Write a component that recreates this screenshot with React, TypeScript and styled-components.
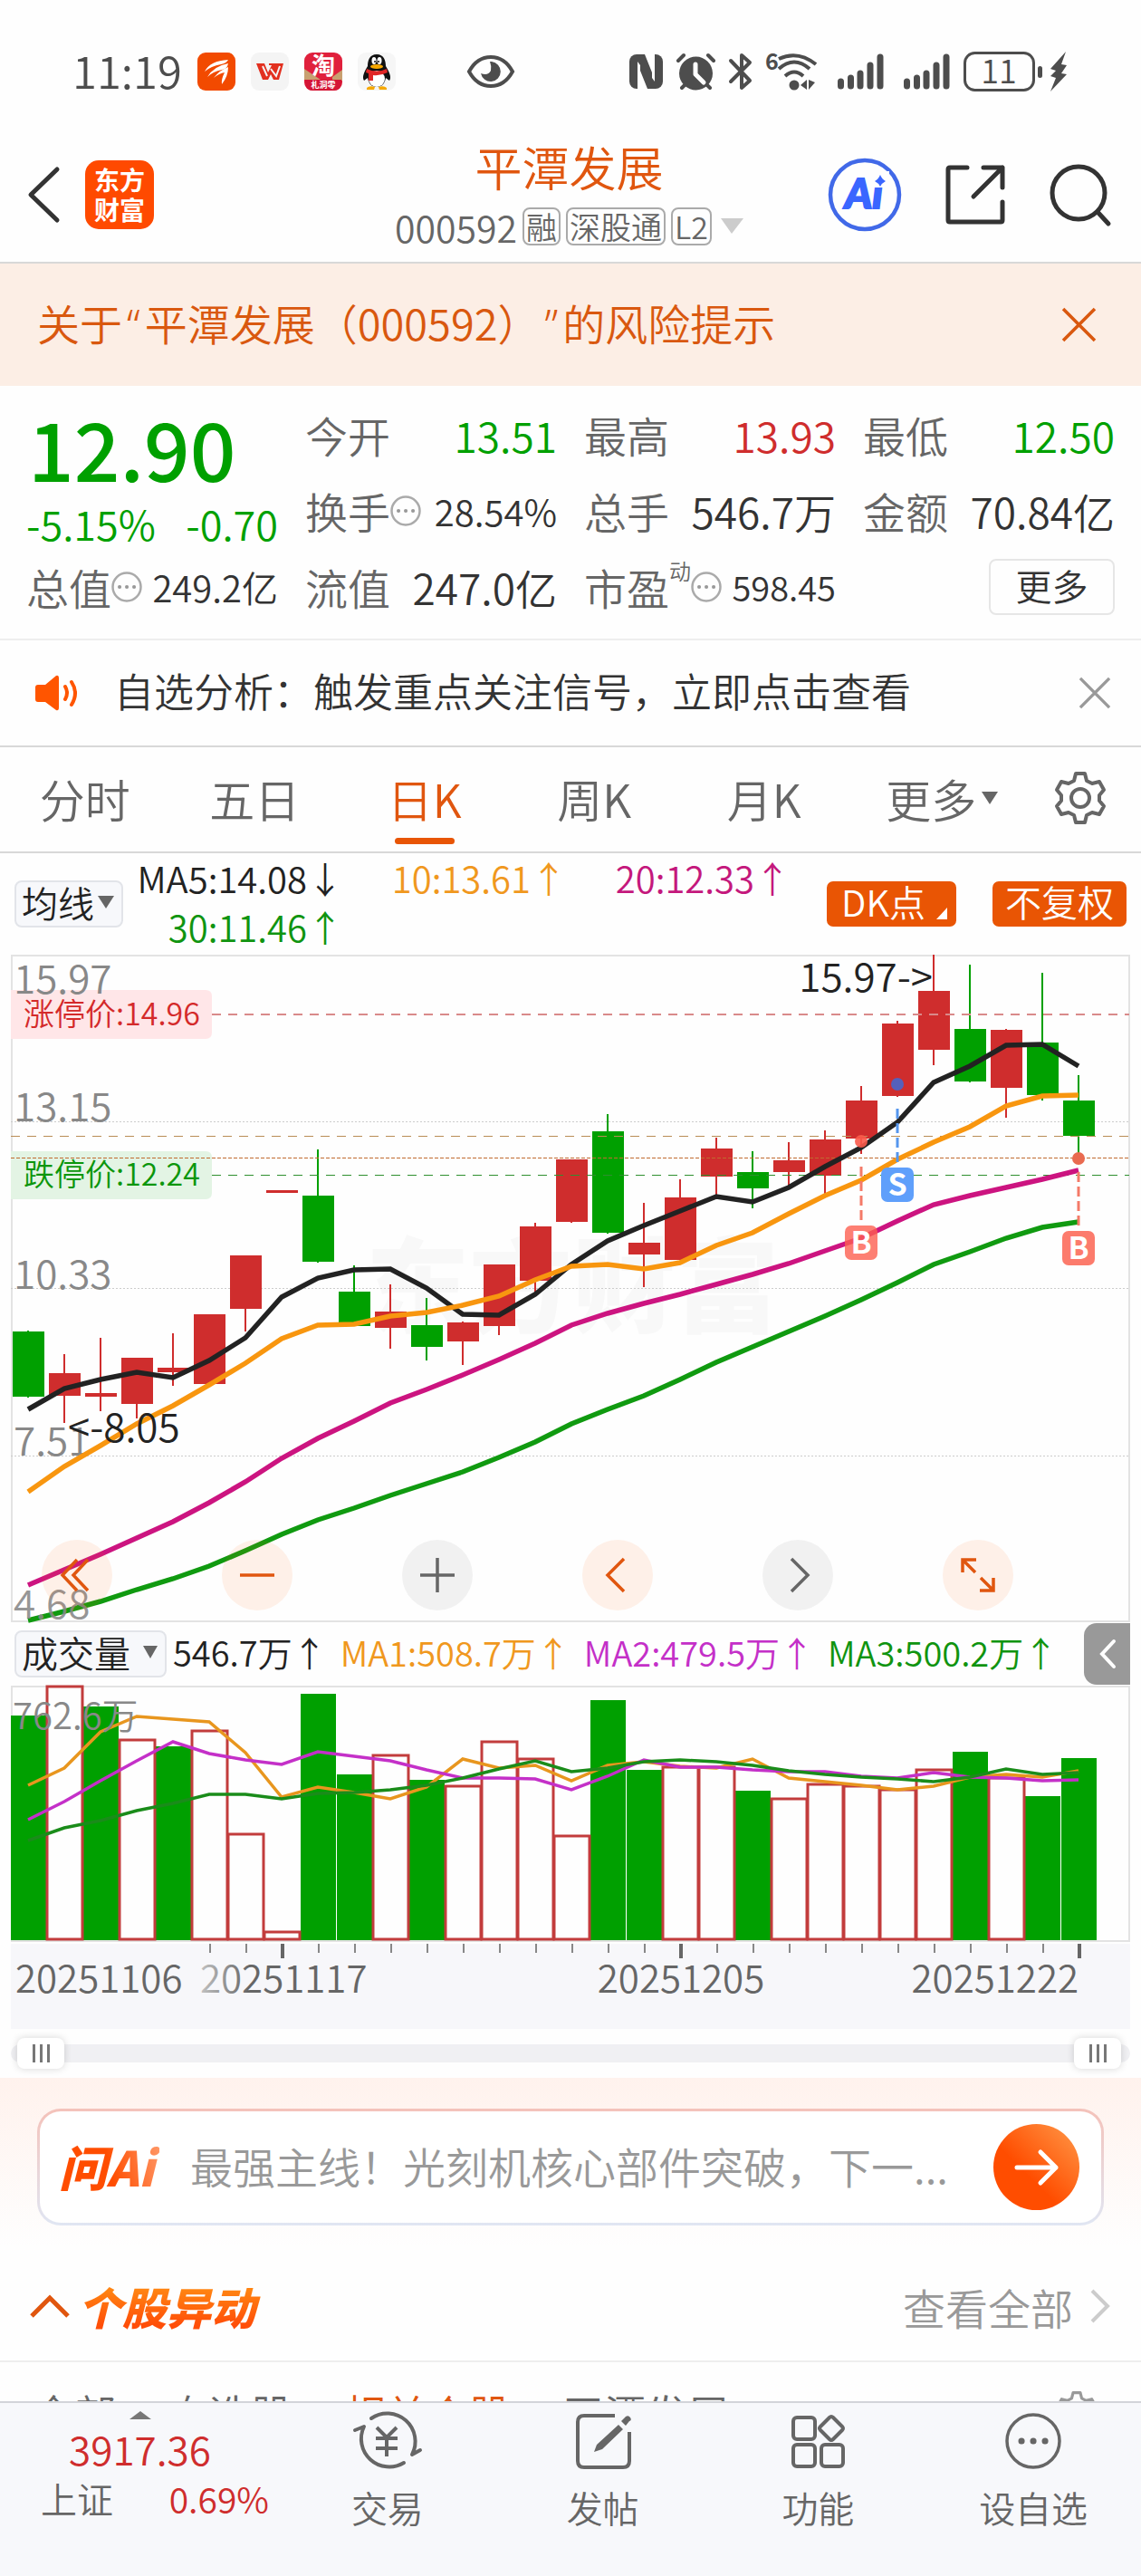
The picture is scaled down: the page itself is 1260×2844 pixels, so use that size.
import React from "react";
import styled, { createGlobalStyle, css } from "styled-components";

const GREEN = "#00a000";
const RED = "#cf2d2d";
const ORANGE = "#e0560f";

const GlobalStyle = createGlobalStyle`
  * { box-sizing: border-box; }
  body { margin: 0; background: #fff; }
  button { font: inherit; color: inherit; background: none; border: 0; padding: 0; cursor: pointer; }
  a { color: inherit; text-decoration: none; }
  svg { display: block; flex: none; overflow: visible; }
`;

const Screen = styled.div`
  display: flex;
  flex-direction: column;
  height: 100vh;
  overflow: hidden;
  background: #fefefe;
  color: #333;
  font-family: "Noto Sans CJK SC", "Noto Sans", sans-serif;
  font-weight: 350;
  text-spacing-trim: space-all;
`;

const Content = styled.main`
  flex: 1;
  min-height: 0;
  overflow-y: auto;
  scrollbar-width: none;
`;

/* ---------- status bar ---------- */

const StatusBar = styled.div`
  display: flex;
  align-items: center;
  justify-content: space-between;
  height: 140px;
  padding: 18px 80px 0 80px;
  color: #4d4d4d;
`;

const StatusGroup = styled.div<{ $gap: number }>`
  display: flex;
  align-items: center;
  gap: ${(p) => p.$gap}px;
`;

const Clock = styled.span`
  padding-bottom: 4px;
  font-size: 49px;
  line-height: 60px;
`;

const EyeSlot = styled.span`
  margin-left: 61px;
`;

/* ---------- header ---------- */

const Header = styled.header`
  display: grid;
  grid-template-columns: 1fr auto 1fr;
  align-items: center;
  height: 151px;
  padding: 0 33px 0 30px;
  border-bottom: 2px solid #d8d8d8;
`;

const HeaderSide = styled.div<{ $end?: boolean }>`
  display: flex;
  align-items: center;
  gap: ${(p) => (p.$end ? 49 : 28)}px;
  justify-content: ${(p) => (p.$end ? "flex-end" : "flex-start")};
`;

const BrandTile = styled.a`
  display: grid;
  place-content: center;
  width: 76px;
  height: 76px;
  border-radius: 15px;
  background: #ff4a00;
  color: #fff;
  font-size: 28px;
  font-weight: 700;
  line-height: 33px;
  text-align: center;
`;

const TitleBlock = styled.div`
  display: flex;
  flex-direction: column;
  align-items: center;
  padding-top: 4px;
`;

const Title = styled.h1`
  margin: 0;
  color: ${ORANGE};
  font-size: 52px;
  font-weight: 350;
  line-height: 66px;
`;

const CodeLine = styled.div`
  display: flex;
  align-items: center;
  gap: 6px;
  height: 66px;
  color: #666;
  font-size: 41px;
  line-height: 66px;
`;

const MarketTag = styled.span`
  padding: 0 2px;
  border: 2px solid #aaa;
  border-radius: 8px;
  font-size: 34px;
  line-height: 38px;
`;

const Caret = styled.svg`
  margin-left: 4px;
`;

/* ---------- notices ---------- */

const RiskNotice = styled.div`
  display: flex;
  align-items: center;
  justify-content: space-between;
  height: 135px;
  padding: 0 50px 0 41px;
  background: #fceee5;
  color: #d9580f;
  font-size: 47px;
`;

const NoticeLink = styled.a`
  flex: 1;
  padding-bottom: 6px;
`;

const Quote = styled.span`
  padding: 0 5px;
  font-family: "Noto Sans", sans-serif;
`;

const WatchNotice = styled.div`
  display: flex;
  align-items: center;
  gap: 38px;
  height: 118px;
  padding: 0 34px 0 38px;
  border-bottom: 2px solid #d8d8d8;
  font-size: 44px;
`;

/* ---------- quote figures ---------- */

const Figures = styled.section`
  display: grid;
  grid-template-columns: repeat(4, 1fr);
  grid-auto-rows: 84px;
  column-gap: 30px;
  padding: 12px 29px 15px;
  border-bottom: 2px solid #eee;
`;

const PriceBlock = styled.div`
  grid-row: span 2;
  display: flex;
  flex-direction: column;
  color: ${GREEN};
`;

const Price = styled.strong`
  padding-left: 2px;
  font-size: 89px;
  font-weight: 500;
  line-height: 112px;
`;

const ChangeLine = styled.div`
  display: flex;
  justify-content: space-between;
  font-size: 45px;
  line-height: 56px;
`;

const Figure = styled.div`
  display: flex;
  align-items: center;
  justify-content: space-between;
  white-space: nowrap;
`;

const FigureLabel = styled.span`
  display: flex;
  align-items: center;
  color: #666;
  font-size: 47px;
  line-height: 60px;
`;

const FigureNote = styled.sup`
  align-self: flex-start;
  font-size: 24px;
  line-height: 24px;
`;

const FigureValue = styled.span<{ $tone?: string; $size?: number }>`
  color: ${(p) => p.$tone ?? "#333"};
  font-size: ${(p) => p.$size ?? 46}px;
  line-height: 60px;
`;

const MoreCell = styled.div`
  display: flex;
  align-items: center;
  justify-content: flex-end;
`;

const MoreButton = styled.button`
  width: 139px;
  height: 62px;
  padding-bottom: 4px;
  border: 2px solid #e6e6e6;
  border-radius: 8px;
  font-size: 40px;
  line-height: 52px;
`;

/* ---------- period tabs ---------- */

const PeriodTabs = styled.nav`
  display: grid;
  grid-template-columns: repeat(6, 1fr) 135px;
  height: 117px;
  border-bottom: 2px solid #d8d8d8;
`;

const PeriodTab = styled.button<{ $active?: boolean; $menu?: boolean }>`
  position: relative;
  display: flex;
  align-items: center;
  justify-content: center;
  gap: 6px;
  padding: 0 0 4px ${(p) => (p.$menu ? 18 : 0)}px;
  color: #666;
  font-size: 50px;
  ${(p) =>
    p.$active &&
    css`
      color: ${ORANGE};
      &::after {
        content: "";
        position: absolute;
        bottom: 8px;
        width: 66px;
        height: 7px;
        border-radius: 4px;
        background: #e85505;
      }
    `}
`;

/* ---------- chart ---------- */

const AverageBar = styled.div`
  display: flex;
  align-items: center;
  height: 112px;
  padding: 0 16px;
`;

const PickerButton = styled.button<{ $gap: number }>`
  display: flex;
  align-items: center;
  flex: none;
  gap: ${(p) => p.$gap}px;
  height: 52px;
  padding: 0 8px 4px 6px;
  border: 2px solid #e2e4e9;
  border-radius: 8px;
  background: #f7f8fb;
  color: #222;
  font-size: 40px;
  line-height: 44px;
  white-space: nowrap;
`;

const Averages = styled.div`
  display: grid;
  grid-template-columns: 243px 247px 247px;
  justify-items: end;
  flex: 1;
  padding-bottom: 4px;
`;

const Average = styled.span<{ $tone: string; $compact?: boolean }>`
  color: ${(p) => p.$tone};
  font-size: ${(p) => (p.$compact ? 38 : 40)}px;
  line-height: 54px;
  white-space: nowrap;
`;

const ToggleButtons = styled.div`
  display: flex;
  gap: 40px;
`;

const ToggleButton = styled.button`
  display: flex;
  align-items: center;
  height: 50px;
  padding: 0 6px 5px 16px;
  border-radius: 7px;
  background: #e95504;
  color: #fff;
  font-size: 40px;
  line-height: 45px;
  svg { align-self: flex-end; }
  &:last-child { padding: 0 14px 5px; }
`;

const ChartFrame = styled.div`
  position: relative;
  margin: 0 12px;
`;

const ChartSvg = styled.svg`
  width: 100%;
  height: auto;
`;

const ChartTools = styled.div`
  position: absolute;
  left: 34px;
  right: 129px;
  bottom: 13px;
  display: flex;
  justify-content: space-between;
`;

const RoundButton = styled.button<{ $muted?: boolean }>`
  display: grid;
  place-items: center;
  width: 78px;
  height: 78px;
  border-radius: 50%;
  background: ${(p) => (p.$muted ? "rgba(0,0,0,0.05)" : "rgba(255,96,16,0.09)")};
  color: ${(p) => (p.$muted ? "#666" : ORANGE)};
`;

const VolumeBar = styled.div`
  display: flex;
  align-items: center;
  height: 70px;
  padding: 0 12px 0 16px;
`;

const VolumeFigures = styled.div`
  display: flex;
  flex: 1;
  gap: 15px;
  margin-left: 7px;
  padding-bottom: 4px;
`;

const FoldButton = styled.button`
  display: grid;
  place-items: center;
  flex: none;
  width: 51px;
  height: 68px;
  border-radius: 14px 0 0 14px;
  background: #999;
`;

/* ---------- range slider ---------- */

const RangeRow = styled.div`
  position: relative;
  display: flex;
  align-items: center;
  height: 54px;
  padding: 0 12px;
`;

const RangeTrack = styled.div`
  flex: 1;
  height: 20px;
  border-radius: 10px;
  background: #f0f0f3;
`;

const RangeInput = styled.input`
  position: absolute;
  left: 19px;
  right: 22px;
  width: calc(100% - 41px);
  height: 34px;
  margin: 0;
  appearance: none;
  background: transparent;
  pointer-events: none;
  &::-webkit-slider-thumb {
    appearance: none;
    pointer-events: auto;
    width: 52px;
    height: 34px;
    border-radius: 8px;
    background:
      linear-gradient(#777, #777) 17px 7px / 3px 20px no-repeat,
      linear-gradient(#777, #777) 25px 7px / 3px 20px no-repeat,
      linear-gradient(#777, #777) 33px 7px / 3px 20px no-repeat,
      #fff;
    box-shadow: 0 0 8px rgba(0, 0, 0, 0.16);
  }
`;

/* ---------- AI prompt ---------- */

const AskSection = styled.section`
  padding: 34px 41px 33px;
  background: linear-gradient(#fff2ed, #fefefe 95%);
`;

const AskBox = styled.div`
  display: flex;
  align-items: center;
  height: 129px;
  padding: 0 24px 0 21px;
  border: 3px solid transparent;
  border-radius: 26px;
  background:
    linear-gradient(#fff, #fff) padding-box,
    linear-gradient(#f4c2ba, #e0e6f3) border-box;
`;

const AskLogo = styled.span`
  padding-right: 6px;
  padding-bottom: 4px;
  background: linear-gradient(75deg, #ff4d00 50%, #ff9a6a);
  background-clip: text;
  color: transparent;
  font-size: 53px;
  font-style: italic;
  font-weight: 900;
  line-height: 64px;
`;

const AskText = styled.a`
  flex: 1;
  min-width: 0;
  margin: 0 30px 0 34px;
  padding-bottom: 4px;
  color: #999;
  font-size: 47px;
  white-space: nowrap;
`;

const AskButton = styled.button`
  display: grid;
  place-items: center;
  flex: none;
  width: 95px;
  height: 95px;
  border-radius: 50%;
  background: linear-gradient(45deg, #ff4d00 40%, #ff9a4a);
`;

/* ---------- stock movement ---------- */

const MovesHeader = styled.div`
  display: flex;
  align-items: center;
  height: 116px;
  padding: 0 33px 4px;
`;

const MovesTitle = styled.h2`
  flex: 1;
  margin: 0 0 0 9px;
  span {
    padding-right: 8px;
    background: linear-gradient(#ff8412 25%, #ff4e08 80%);
    background-clip: text;
    color: transparent;
    font-size: 49px;
    font-style: italic;
    font-weight: 900;
    line-height: 60px;
  }
`;

const AllLink = styled.a`
  display: flex;
  align-items: center;
  gap: 18px;
  color: #999;
  font-size: 47px;
`;

const MovesTabs = styled.nav`
  display: flex;
  align-items: center;
  gap: 57px;
  height: 112px;
  padding: 0 48px 0 36px;
  border-top: 2px solid #eee;
  font-size: 46px;
`;

const MovesTab = styled.button<{ $active?: boolean }>`
  color: ${(p) => (p.$active ? ORANGE : "#666")};
  white-space: nowrap;
`;

const MovesSettings = styled.button`
  margin-left: auto;
  color: #999;
`;

/* ---------- bottom bar ---------- */

const BottomBar = styled.footer`
  display: grid;
  grid-template-columns: 309px repeat(4, 1fr);
  flex: none;
  height: 193px;
  border-top: 2px solid #d2d4d9;
  background: #f7f8fb;
  color: #666;
`;

const IndexCell = styled.a`
  display: flex;
  flex-direction: column;
  align-items: center;
  padding-top: 9px;
`;

const IndexValue = styled.span`
  margin-top: 2px;
  color: ${RED};
  font-size: 44px;
  line-height: 60px;
`;

const IndexLine = styled.span`
  display: flex;
  align-items: center;
  align-self: stretch;
  justify-content: space-between;
  padding: 0 12px 0 45px;
  font-size: 40px;
  line-height: 50px;
`;

const IndexChange = styled.span`
  color: ${RED};
  font-size: 39px;
`;

const NavItem = styled.button`
  display: flex;
  flex-direction: column;
  align-items: center;
  gap: 12px;
  padding-top: 9px;
  font-size: 40px;
  line-height: 56px;
`;

/* ---------- icons ---------- */

const EastIcon = () => (
  <svg width="42" height="42" viewBox="0 0 42 42">
    <rect width="42" height="42" rx="9" fill="#f24a00" />
    <path d="M8 21Q14 9 34 8Q32 12 26 13Q15 15 8 21Z" fill="#fff" />
    <path d="M11 27Q18 15 34 12Q33 18 27 19Q17 21 11 27Z" fill="#fff" />
    <path d="M18 28Q25 19 34 16Q34 26 27 35Q26 30 30 22Q24 23 18 28Z" fill="#fff" />
  </svg>
);

const WpsIcon = () => (
  <svg width="42" height="42" viewBox="0 0 42 42">
    <rect width="42" height="42" rx="9" fill="#f4f4f4" />
    <path d="M6 12H15L19 22L23 14H20V12H36L31 30H25L22 24L19 30H13Z" fill="#e2301f" />
    <path d="M13 15L18 26M22 18L28 26L32 15" stroke="#f4f4f4" strokeWidth="2" fill="none" />
  </svg>
);

const TaobaoIcon = () => (
  <svg width="42" height="42" viewBox="0 0 42 42">
    <rect width="42" height="42" rx="9" fill="#e0203c" />
    <path d="M0 18L9 24L18 30H0ZM42 19L31 27V31H42Z" fill="#c8a070" />
    <path d="M1 30H41V33Q41 42 32 42H10Q1 42 1 33Z" fill="#d41535" />
    <text x="21" y="24" fontSize="26" fontWeight="700" fill="#fff" textAnchor="middle">淘</text>
    <text x="21" y="39" fontSize="9" fontWeight="700" fill="#fff" textAnchor="middle">札洞零</text>
  </svg>
);

const PenguinIcon = () => (
  <svg width="42" height="42" viewBox="0 0 42 42">
    <rect width="42" height="42" rx="9" fill="#f6f6f6" />
    <path d="M21 2C13 2 11 9 11 15C8 20 4 27 7 31L11 28C12 34 15 38 21 38S30 34 31 28L35 31C38 27 34 20 31 15C31 9 29 2 21 2Z" fill="#111" />
    <ellipse cx="21" cy="29" rx="9" ry="9" fill="#fff" />
    <ellipse cx="18" cy="9" rx="2.5" ry="4" fill="#fff" />
    <ellipse cx="24" cy="9" rx="2.5" ry="4" fill="#fff" />
    <circle cx="19" cy="10" r="1" fill="#111" />
    <circle cx="23" cy="10" r="1" fill="#111" />
    <ellipse cx="21" cy="15.500" rx="7" ry="2.500" fill="#f6a800" />
    <path d="M10 18Q21 23 32 18L33 22Q25 26 17 25V31H12V23L9 22Z" fill="#e02525" />
    <path d="M10 39Q13 36 19 38L18 41H10ZM32 39Q29 36 23 38L24 41H32Z" fill="#f6a800" />
  </svg>
);

const EyeIcon = () => (
  <svg width="54" height="38" viewBox="0 0 54 38">
    <path d="M3 19C9 8 17 3 27 3S45 8 51 19C45 30 37 35 27 35S9 30 3 19Z" fill="none" stroke="#4d4d4d" strokeWidth="4" />
    <path d="M28 8A11 11 0 1 1 16 21Q24 24 27 18Q28 13 26 8Z" fill="#4d4d4d" />
  </svg>
);

const NfcIcon = () => (
  <svg width="37" height="38" viewBox="0 0 37 38">
    <rect width="37" height="38" rx="8" fill="#4d4d4d" />
    <path d="M9 38V8L12 12V38ZM28 0V30L25 26V0Z" fill="#fff" />
    <path d="M12 18V38H20ZM25 20V0H17Z" fill="#fff" />
  </svg>
);

const AlarmIcon = () => (
  <svg width="43" height="41" viewBox="0 0 43 41">
    <circle cx="21.500" cy="22" r="18.500" fill="#4d4d4d" />
    <path d="M2 8L8 2M41 8L35 2M6 38L11 33M37 38L32 33" stroke="#4d4d4d" strokeWidth="4" strokeLinecap="round" />
    <path d="M21 12V23L30 32" stroke="#fff" strokeWidth="5" strokeLinecap="round" strokeLinejoin="round" fill="none" />
  </svg>
);

const BluetoothIcon = () => (
  <svg width="26" height="42" viewBox="0 0 26 42">
    <path d="M2 9L23 31L14 39V3L23 11L2 32" fill="none" stroke="#4d4d4d" strokeWidth="4" strokeLinecap="round" strokeLinejoin="round" />
  </svg>
);

const WifiIcon = () => (
  <svg width="57" height="44" viewBox="0 0 57 44">
    <text x="-1" y="20" fontSize="25" fontWeight="700" fill="#4d4d4d">6</text>
    <g fill="none" stroke="#4d4d4d" strokeWidth="4">
      <path d="M14 8Q35 -2 55 14" />
      <path d="M14 19Q31 4 48 19" />
      <path d="M21 27Q31 18 41 27" />
    </g>
    <circle cx="31" cy="37" r="5.500" fill="#4d4d4d" />
    <path d="M45 31V42L38 37ZM47 31V42L54 34Z" fill="#4d4d4d" />
  </svg>
);

const SignalIcon = () => (
  <svg width="58" height="42" viewBox="0 0 58 42">
    <path d="M10.500 32V37M21.500 28V37M32 23V37M43 14V37M54 5V37" stroke="#4d4d4d" strokeWidth="7" strokeLinecap="round" />
  </svg>
);

const BatteryIcon = () => (
  <svg width="116" height="46" viewBox="0 0 116 46">
    <rect x="1.500" y="2.500" width="76" height="41" rx="11" fill="none" stroke="#4d4d4d" strokeWidth="3" />
    <rect x="82" y="17" width="5" height="13" rx="2.500" fill="#4d4d4d" />
    <text x="39" y="36" fontSize="36" fill="#4d4d4d" textAnchor="middle">11</text>
    <path d="M113 1L96 20L102 22L96 28L102 30L96 45L114 26L108 25L114 16L108 15Z" fill="#4d4d4d" />
  </svg>
);

const BackIcon = () => (
  <svg width="36" height="62" viewBox="0 0 36 62">
    <path d="M33 3L4 31L33 59" fill="none" stroke="#333" strokeWidth="5" strokeLinecap="round" strokeLinejoin="round" />
  </svg>
);

const AiIcon = () => (
  <svg width="80" height="80" viewBox="0 0 80 80">
    <circle cx="40" cy="40" r="38" fill="none" stroke="#4169e8" strokeWidth="4.500" />
    <text x="39" y="55" fontFamily="Lato, sans-serif" fontSize="46" fontWeight="900" fontStyle="italic" fill="#3a66ff" stroke="#3a66ff" strokeWidth="2" textAnchor="middle">Ai</text>
    <rect x="49" y="14" width="18" height="18" fill="#fefefe" />
    <path d="M57 18Q59 23 63 25Q59 27 57 31Q55 27 51 25Q55 23 57 18Z" fill="#3a66ff" />
  </svg>
);

const ShareIcon = () => (
  <svg width="66" height="66" viewBox="0 0 66 66" fill="none" stroke="#333" strokeWidth="5" strokeLinecap="round" strokeLinejoin="round">
    <path d="M24 3H5Q3 3 3 5V61Q3 63 5 63H61Q63 63 63 61V41M42 3H63V25M63 3L31 35" />
  </svg>
);

const SearchIcon = () => (
  <svg width="68" height="68" viewBox="0 0 68 68" fill="none" stroke="#333" strokeWidth="5" strokeLinecap="round">
    <circle cx="32" cy="32" r="29" />
    <path d="M53 53L65 66" />
  </svg>
);

const CrossIcon = ({ size, color }: { size: number; color: string }) => (
  <svg width={size} height={size} viewBox="0 0 36 36" stroke={color} strokeWidth="3.500">
    <path d="M1 1L35 35M35 1L1 35" />
  </svg>
);

const DotsCircle = () => (
  <svg width="34" height="34" viewBox="0 0 34 34">
    <circle cx="17" cy="17" r="15.500" fill="none" stroke="#aaa" strokeWidth="2.500" />
    <path d="M9 17H9.100M17 17H17.100M25 17H25.100" stroke="#999" strokeWidth="4" strokeLinecap="round" />
  </svg>
);

const SpeakerIcon = () => (
  <svg width="50" height="40" viewBox="0 0 50 40">
    <path d="M4 11H12L24 1Q27 0 27 4V36Q27 40 24 39L12 30H4Q1 30 1 27V14Q1 11 4 11Z" fill="#ff5500" />
    <path d="M34 13Q38 20 34 27M41 8Q49 20 41 33" fill="none" stroke="#ff5500" strokeWidth="4" strokeLinecap="round" />
  </svg>
);

const Triangle = ({ w, h, color, up }: { w: number; h: number; color: string; up?: boolean }) => (
  <svg width={w} height={h} viewBox="0 0 10 10" preserveAspectRatio="none">
    <path d={up ? "M0 10H10L5 0Z" : "M0 0H10L5 10Z"} fill={color} />
  </svg>
);

const GearIcon = ({ size }: { size: number }) => (
  <svg width={size} height={size} viewBox="0 0 58 58" fill="none" stroke="currentColor" strokeWidth="4" strokeLinejoin="round">
    <path d="M24 2H34L36 10L42 13L50 11L55 20L50 26V32L55 38L50 47L42 45L36 48L34 56H24L22 48L16 45L8 47L3 38L8 32V26L3 20L8 11L16 13L22 10Z" />
    <circle cx="29" cy="29" r="10" />
  </svg>
);

const TradeIcon = () => (
  <svg width="76" height="66" viewBox="0 0 76 66" fill="none" stroke="#666" strokeWidth="4">
    <path d="M20 8A31 31 0 0 1 65 48L74 43" strokeLinejoin="round" strokeLinecap="round" />
    <path d="M56 57A31 31 0 0 1 12 17L2 21" strokeLinejoin="round" strokeLinecap="round" />
    <path d="M26 18L37 29L48 18M25 30H49M25 41H49M37 29V50" />
  </svg>
);

const PostIcon = () => (
  <svg width="62" height="66" viewBox="0 0 62 66">
    <path d="M44 5H10Q3 5 3 12V55Q3 62 10 62H53Q60 62 60 55V23" fill="none" stroke="#666" strokeWidth="4" />
    <path d="M48 15L53 20L30 42L21 45L24 37ZM51 11L56 6Q59 4 61 7T60 11L56 16Z" fill="#666" />
  </svg>
);

const FeatureIcon = () => (
  <svg width="60" height="66" viewBox="0 0 60 66" fill="none" stroke="#666" strokeWidth="4">
    <rect x="3" y="7" width="24" height="24" rx="4" />
    <rect x="3" y="37" width="24" height="24" rx="4" />
    <rect x="34" y="37" width="24" height="24" rx="4" />
    <path d="M43 7Q45 5 47 7L57 17Q59 19 57 21L47 31Q45 33 43 31L33 21Q31 19 33 17Z" />
  </svg>
);

const FavouriteIcon = () => (
  <svg width="64" height="66" viewBox="0 0 64 66">
    <circle cx="32" cy="33" r="29" fill="none" stroke="#666" strokeWidth="3.500" />
    <path d="M19 33H19.100M32 33H32.100M45 33H45.100" stroke="#666" strokeWidth="7" strokeLinecap="round" />
  </svg>
);

/* ---------- chart data (chart units, y grows downwards) ---------- */

const STEP = 40;
const centre = (i: number) => 31 + i * STEP;

// [rising, body top, body bottom, wick top, wick bottom]
const CANDLES: [number, number, number, number, number][] = [
  [0, 1470, 1542, 1469, 1543], [1, 1516, 1541, 1495, 1571], [1, 1538, 1542, 1477, 1558],
  [1, 1499, 1550, 1499, 1566], [1, 1510, 1515, 1472, 1530], [1, 1451, 1528, 1451, 1528],
  [1, 1386, 1445, 1386, 1470], [1, 1314, 1317, 1314, 1317], [0, 1320, 1393, 1269, 1394],
  [0, 1426, 1464, 1397, 1464], [1, 1448, 1466, 1418, 1489], [0, 1463, 1487, 1433, 1502],
  [1, 1460, 1481, 1459, 1507], [1, 1396, 1464, 1396, 1474], [1, 1354, 1414, 1350, 1427],
  [1, 1280, 1349, 1280, 1350], [0, 1249, 1361, 1230, 1362], [1, 1372, 1385, 1328, 1421],
  [1, 1322, 1391, 1302, 1391], [1, 1268, 1299, 1256, 1319], [0, 1294, 1312, 1271, 1334],
  [1, 1281, 1294, 1261, 1310], [1, 1258, 1298, 1248, 1318], [1, 1215, 1257, 1199, 1274],
  [1, 1130, 1210, 1127, 1211], [1, 1094, 1159, 1054, 1176], [0, 1136, 1194, 1065, 1195],
  [1, 1137, 1201, 1136, 1234], [0, 1151, 1209, 1074, 1215], [0, 1215, 1254, 1187, 1280],
];

const PRICE_LINES = [
  { color: "#222", y: [1556, 1533, 1523, 1515, 1521, 1502, 1477, 1432, 1411, 1402, 1401, 1422, 1451, 1452, 1429, 1396, 1370, 1353, 1337, 1321, 1327, 1311, 1288, 1267, 1239, 1195, 1177, 1154, 1153, 1177] },
  { color: "#f8960f", y: [1647, 1619, 1596, 1572, 1552, 1529, 1505, 1478, 1463, 1462, 1453, 1449, 1441, 1431, 1413, 1398, 1396, 1401, 1394, 1375, 1361, 1340, 1320, 1303, 1280, 1261, 1244, 1221, 1210, 1209] },
  { color: "#cc1480", y: [1750, 1733, 1716, 1698, 1680, 1659, 1636, 1610, 1588, 1569, 1549, 1534, 1518, 1501, 1483, 1463, 1450, 1439, 1429, 1418, 1407, 1395, 1381, 1367, 1348, 1330, 1320, 1311, 1302, 1292] },
  { color: "#109a10", y: [1789, 1779, 1768, 1755, 1743, 1729, 1712, 1694, 1678, 1665, 1651, 1638, 1625, 1609, 1592, 1572, 1556, 1541, 1523, 1504, 1487, 1470, 1453, 1435, 1416, 1396, 1382, 1367, 1355, 1349] },
];

// [rising, bar top]
const VOLUMES: [number, number][] = [
  [0, 1894], [1, 1862], [0, 1884], [1, 1921], [0, 1928], [1, 1911], [1, 2025], [1, 2133],
  [0, 1870], [0, 1959], [1, 1938], [0, 1965], [1, 1972], [1, 1923], [1, 1942], [1, 2027],
  [0, 1877], [0, 1954], [1, 1951], [1, 1951], [0, 1977], [1, 1986], [1, 1970], [1, 1972],
  [1, 1976], [1, 1954], [0, 1934], [1, 1963], [0, 1983], [0, 1941],
];

const VOLUME_LINES = [
  { color: "#e8961e", y: [1971, 1952, 1912, 1895, 1898, 1901, 1935, 1984, 1973, 1979, 1986, 1973, 1942, 1952, 1949, 1966, 1949, 1945, 1950, 1952, 1942, 1963, 1967, 1971, 1976, 1972, 1962, 1959, 1962, 1955] },
  { color: "#c430c8", y: [2009, 1989, 1966, 1944, 1923, 1936, 1943, 1948, 1934, 1939, 1944, 1954, 1963, 1963, 1964, 1976, 1961, 1943, 1951, 1951, 1954, 1956, 1956, 1961, 1963, 1957, 1962, 1963, 1966, 1965] },
  { color: "#1a8c1a", y: [2032, 2018, 2010, 1999, 1991, 1981, 1981, 1986, 1980, 1979, 1976, 1971, 1963, 1953, 1944, 1956, 1952, 1945, 1943, 1945, 1949, 1955, 1959, 1962, 1964, 1967, 1962, 1953, 1959, 1957] },
];

const toPoints = (ys: number[]) => ys.map((y, i) => `${centre(i)},${y}`).join(" ");

const Marker = ({ x, y, letter, color }: { x: number; y: number; letter: string; color: string }) => (
  <g>
    <rect x={x - 18} y={y} width="36" height="38" rx="7" fill={color} />
    <text x={x} y={y + 31} fontSize="34" fontWeight="700" fill="#fff" textAnchor="middle">{letter}</text>
  </g>
);

const PriceChart = () => (
  <ChartSvg viewBox="12 1054 1236 737" role="img" aria-label="日K">
    <rect x="13" y="1055" width="1234" height="735" fill="none" stroke="#e3e3e3" strokeWidth="2" />
    <text x="404" y="1462" fontSize="114" fontWeight="900" fill="#f8f8f8">东方财富</text>
    {[1238, 1422, 1607].map((y) => (
      <path key={y} d={`M12 ${y}.5H1247`} stroke="#ccc" strokeWidth="1" strokeDasharray="2 2" />
    ))}
    <path d="M12 1093H227Q234 1093 234 1100V1140Q234 1147 227 1147H12Z" fill="#ffe6e8" />
    <path d="M12 1271H227Q234 1271 234 1278V1317Q234 1324 227 1324H12Z" fill="#e3f4e4" />
    <g fontSize="44" fill="#888">
      <text x="15" y="1097">15.97</text>
      <text x="15" y="1238">13.15</text>
      <text x="15" y="1423">10.33</text>
      <text x="15" y="1607">7.51</text>
    </g>
    <text x="26" y="1132" fontSize="34" fill="#d42a2a">涨停价:14.96</text>
    <text x="26" y="1309" fontSize="34" fill="#0c960c">跌停价:12.24</text>
    {CANDLES.map(([up, top, bottom, high, low], i) => (
      <g key={i} fill={up ? RED : GREEN}>
        <rect x={centre(i) - 1} y={high} width="2" height={low - high} />
        <rect x={centre(i) - 17} y={top} width="35" height={bottom - top} />
      </g>
    ))}
    <path d="M234 1120H1247" stroke="#d98a8a" strokeWidth="2" strokeDasharray="10 8" />
    <path d="M12 1254.500H1247" stroke="#b98d55" strokeWidth="1" strokeDasharray="10 8" />
    <path d="M12 1278.500H1247" stroke="#c06a30" strokeWidth="1" strokeDasharray="4 2" />
    <path d="M234 1297.500H1247" stroke="#2f8f2f" strokeWidth="1" strokeDasharray="10 8" />
    {PRICE_LINES.map((line) => (
      <polyline key={line.color} points={toPoints(line.y)} fill="none" stroke={line.color} strokeWidth="5.500" />
    ))}
    <text x="15" y="1787" fontSize="44" fill="#888" fillOpacity="0.9">4.68</text>
    <g fontSize="44" fill="#222">
      <text x="75" y="1592">&lt;-8.05</text>
      <text x="1030" y="1095" textAnchor="end">15.97-&gt;</text>
    </g>
    <path d="M951 1288V1352M1191 1294V1358" stroke="#f47a68" strokeWidth="3" strokeDasharray="11 5" />
    <path d="M991 1224V1288" stroke="#5596ee" strokeWidth="3" strokeDasharray="11 5" />
    <circle cx="951" cy="1260" r="7" fill="#fb5a4a" fillOpacity="0.9" />
    <circle cx="991" cy="1197" r="7" fill="#5560bb" />
    <circle cx="1191" cy="1279" r="7" fill="#e96a50" />
    <Marker x={951} y={1353} letter="B" color="rgba(252,95,80,0.8)" />
    <Marker x={991} y={1289} letter="S" color="#5f9ffb" />
    <Marker x={1191} y={1359} letter="B" color="#fc7b6c" />
  </ChartSvg>
);

const MAJOR_TICKS = [312, 752, 1192];
const TICKS = Array.from({ length: 25 }, (_, i) => 232 + i * STEP);

const VolumeChart = () => (
  <ChartSvg viewBox="12 1861 1236 379" role="img" aria-label="成交量">
    <defs>
      <linearGradient id="dateFade" gradientUnits="userSpaceOnUse" x1="215" x2="275" y1="0" y2="0">
        <stop offset="0" stopColor="#ccc" />
        <stop offset="1" stopColor="#666" />
      </linearGradient>
    </defs>
    <rect x="13" y="1862" width="1234" height="281" fill="none" stroke="#e3e3e3" strokeWidth="2" />
    {VOLUMES.map(([up, top], i) =>
      up ? null : <rect key={i} x={12 + i * STEP} y={top} width="39" height={2142 - top} fill={GREEN} />
    )}
    {VOLUMES.map(([up, top], i) =>
      up ? (
        <rect key={i} x={12 + i * STEP} y={top} width="39" height={2141 - top} fill="#fefefe" stroke="#c23c3c" strokeWidth="3" />
      ) : null
    )}
    {VOLUME_LINES.map((line) => (
      <polyline key={line.color} points={toPoints(line.y)} fill="none" stroke={line.color} strokeWidth="3.500" />
    ))}
    <text x="14" y="1909" fontSize="40" fill="#888">762.6万</text>
    <rect x="12" y="2146" width="1236" height="94" fill="#f7f7fa" />
    {TICKS.map((x) => {
      const major = MAJOR_TICKS.includes(x);
      return <rect key={x} x={major ? x - 2 : x - 1} y="2146" width={major ? 4 : 2} height={major ? 16 : 10} fill={major ? "#666" : "#888"} />;
    })}
    <g fontSize="42" fill="#666">
      <text x="17" y="2200">20251106</text>
      <text x="221" y="2200" fill="url(#dateFade)">20251117</text>
      <text x="752" y="2200" textAnchor="middle">20251205</text>
      <text x="1191" y="2200" textAnchor="end">20251222</text>
    </g>
  </ChartSvg>
);

const ToolGlyph = ({ d }: { d: string }) => (
  <svg width="40" height="40" viewBox="0 0 40 40" fill="none" stroke="currentColor" strokeWidth="3.500">
    <path d={d} />
  </svg>
);

const TOOLS = [
  { label: "最早", d: "M20 3L4 20L20 37M32 3L16 20L32 37" },
  { label: "缩小", d: "M1 20H39" },
  { label: "放大", d: "M1 20H39M20 1V39", muted: true },
  { label: "向左", d: "M27 2L9 20L27 38" },
  { label: "向右", d: "M13 2L31 20L13 38", muted: true },
  { label: "全屏", d: "M3 17V3H18M3 3L17 17M37 23V37H22M37 37L23 23" },
];

const NAV = [
  { label: "交易", icon: <TradeIcon /> },
  { label: "发帖", icon: <PostIcon /> },
  { label: "功能", icon: <FeatureIcon /> },
  { label: "设自选", icon: <FavouriteIcon /> },
];

export default function App() {
  return (
    <Screen>
      <GlobalStyle />
      <Content>
        <StatusBar>
          <StatusGroup $gap={17}>
            <Clock>11:19</Clock>
            <EastIcon />
            <WpsIcon />
            <TaobaoIcon />
            <PenguinIcon />
            <EyeSlot><EyeIcon /></EyeSlot>
          </StatusGroup>
          <StatusGroup $gap={15}>
            <NfcIcon />
            <AlarmIcon />
            <BluetoothIcon />
            <WifiIcon />
            <SignalIcon />
            <SignalIcon />
            <BatteryIcon />
          </StatusGroup>
        </StatusBar>

        <Header>
          <HeaderSide>
            <button aria-label="返回"><BackIcon /></button>
            <BrandTile href="#">东方<br />财富</BrandTile>
          </HeaderSide>
          <TitleBlock>
            <Title>平潭发展</Title>
            <CodeLine>
              <span>000592</span>
              <MarketTag>融</MarketTag>
              <MarketTag>深股通</MarketTag>
              <MarketTag>L2</MarketTag>
              <Caret width="25" height="17" viewBox="0 0 25 17"><path d="M0 0H25L12 17Z" fill="#ccc" /></Caret>
            </CodeLine>
          </TitleBlock>
          <HeaderSide $end>
            <button aria-label="Ai"><AiIcon /></button>
            <button aria-label="分享"><ShareIcon /></button>
            <button aria-label="搜索"><SearchIcon /></button>
          </HeaderSide>
        </Header>

        <RiskNotice>
          <NoticeLink href="#">关于<Quote>“</Quote>平潭发展（000592）<Quote>”</Quote>的风险提示</NoticeLink>
          <button aria-label="关闭"><CrossIcon size={37} color="#d9580f" /></button>
        </RiskNotice>

        <Figures>
          <PriceBlock>
            <Price>12.90</Price>
            <ChangeLine><span>-5.15%</span><span>-0.70</span></ChangeLine>
          </PriceBlock>
          <Figure><FigureLabel>今开</FigureLabel><FigureValue $tone={GREEN}>13.51</FigureValue></Figure>
          <Figure><FigureLabel>最高</FigureLabel><FigureValue $tone={RED}>13.93</FigureValue></Figure>
          <Figure><FigureLabel>最低</FigureLabel><FigureValue $tone={GREEN}>12.50</FigureValue></Figure>
          <Figure><FigureLabel>换手<DotsCircle /></FigureLabel><FigureValue $size={40}>28.54%</FigureValue></Figure>
          <Figure><FigureLabel>总手</FigureLabel><FigureValue>546.7万</FigureValue></Figure>
          <Figure><FigureLabel>金额</FigureLabel><FigureValue>70.84亿</FigureValue></Figure>
          <Figure><FigureLabel>总值<DotsCircle /></FigureLabel><FigureValue $size={40}>249.2亿</FigureValue></Figure>
          <Figure><FigureLabel>流值</FigureLabel><FigureValue>247.0亿</FigureValue></Figure>
          <Figure>
            <FigureLabel>市盈<FigureNote>动</FigureNote><DotsCircle /></FigureLabel>
            <FigureValue $size={38}>598.45</FigureValue>
          </Figure>
          <MoreCell><MoreButton>更多</MoreButton></MoreCell>
        </Figures>

        <WatchNotice>
          <SpeakerIcon />
          <NoticeLink href="#">自选分析：触发重点关注信号，立即点击查看</NoticeLink>
          <button aria-label="关闭"><CrossIcon size={34} color="#999" /></button>
        </WatchNotice>

        <PeriodTabs>
          <PeriodTab>分时</PeriodTab>
          <PeriodTab>五日</PeriodTab>
          <PeriodTab $active>日K</PeriodTab>
          <PeriodTab>周K</PeriodTab>
          <PeriodTab>月K</PeriodTab>
          <PeriodTab $menu>更多<Triangle w={18} h={14} color="#666" /></PeriodTab>
          <PeriodTab aria-label="设置"><GearIcon size={58} /></PeriodTab>
        </PeriodTabs>

        <AverageBar>
          <PickerButton $gap={4}>均线<Triangle w={18} h={14} color="#666" /></PickerButton>
          <Averages>
            <Average $tone="#222">MA5:14.08↓</Average>
            <Average $tone="#f0981e">10:13.61↑</Average>
            <Average $tone="#c4187c">20:12.33↑</Average>
            <Average $tone="#109410">30:11.46↑</Average>
          </Averages>
          <ToggleButtons>
            <ToggleButton>
              DK点
              <svg width="28" height="18" viewBox="0 0 28 18"><path d="M24 2V15H12Z" fill="#fff" /></svg>
            </ToggleButton>
            <ToggleButton>不复权</ToggleButton>
          </ToggleButtons>
        </AverageBar>

        <ChartFrame>
          <PriceChart />
          <ChartTools>
            {TOOLS.map((tool) => (
              <RoundButton key={tool.label} $muted={tool.muted} aria-label={tool.label}>
                <ToolGlyph d={tool.d} />
              </RoundButton>
            ))}
          </ChartTools>
        </ChartFrame>

        <VolumeBar>
          <PickerButton $gap={14}>成交量<Triangle w={16} h={14} color="#666" /></PickerButton>
          <VolumeFigures>
            <Average $compact $tone="#222">546.7万↑</Average>
            <Average $compact $tone="#f0981e">MA1:508.7万↑</Average>
            <Average $compact $tone="#c430c8">MA2:479.5万↑</Average>
            <Average $compact $tone="#109410">MA3:500.2万↑</Average>
          </VolumeFigures>
          <FoldButton aria-label="展开">
            <svg width="22" height="34" viewBox="0 0 22 34"><path d="M18 3L5 17L18 31" fill="none" stroke="#fff" strokeWidth="4" strokeLinecap="round" /></svg>
          </FoldButton>
        </VolumeBar>

        <ChartFrame><VolumeChart /></ChartFrame>

        <RangeRow>
          <RangeTrack />
          <RangeInput type="range" min={0} max={100} defaultValue={0} aria-label="开始日期" />
          <RangeInput type="range" min={0} max={100} defaultValue={100} aria-label="结束日期" />
        </RangeRow>

        <AskSection>
          <AskBox>
            <AskLogo>问Ai</AskLogo>
            <AskText href="#">最强主线！光刻机核心部件突破，下一...</AskText>
            <AskButton aria-label="提问">
              <svg width="50" height="42" viewBox="0 0 50 42" fill="none" stroke="#fff" strokeWidth="5" strokeLinecap="round" strokeLinejoin="round">
                <path d="M3 21H46M29 4L46 21L29 38" />
              </svg>
            </AskButton>
          </AskBox>
        </AskSection>

        <section>
          <MovesHeader>
            <svg width="44" height="26" viewBox="0 0 44 26"><path d="M2 24L22 4L42 24" fill="none" stroke={ORANGE} strokeWidth="5" /></svg>
            <MovesTitle><span>个股异动</span></MovesTitle>
            <AllLink href="#">
              查看全部
              <svg width="24" height="40" viewBox="0 0 24 40"><path d="M3 3L20 20L3 37" fill="none" stroke="#ccc" strokeWidth="4" /></svg>
            </AllLink>
          </MovesHeader>
          <MovesTabs>
            <MovesTab>全部</MovesTab>
            <MovesTab>自选股</MovesTab>
            <MovesTab $active>相关个股</MovesTab>
            <MovesTab>平潭发展</MovesTab>
            <MovesSettings aria-label="设置"><GearIcon size={46} /></MovesSettings>
          </MovesTabs>
        </section>
      </Content>

      <BottomBar>
        <IndexCell href="#">
          <Triangle w={24} h={9} color="#777" up />
          <IndexValue>3917.36</IndexValue>
          <IndexLine>上证<IndexChange>0.69%</IndexChange></IndexLine>
        </IndexCell>
        {NAV.map((item) => (
          <NavItem key={item.label}>
            {item.icon}
            {item.label}
          </NavItem>
        ))}
      </BottomBar>
    </Screen>
  );
}
